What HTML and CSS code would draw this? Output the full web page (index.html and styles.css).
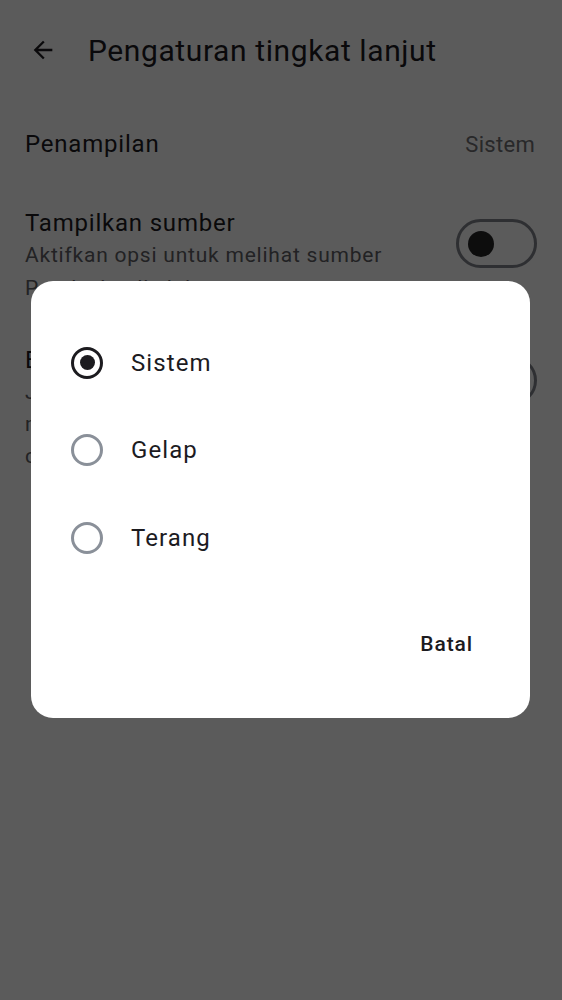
FILE: index.html
```html
<!DOCTYPE html>
<html lang="id">
<head>
<meta charset="utf-8">
<link rel="stylesheet" href="styles.css">
</head>
<body>
<div class="page">
  <header class="topbar">
    <svg class="back" width="28" height="28" viewBox="0 0 24 24"><path d="M20 11H7.83l5.59-5.59L12 4l-8 8 8 8 1.41-1.41L7.83 13H20v-2z" fill="#1c1b1f"/></svg>
    <h1 class="title">Pengaturan tingkat lanjut</h1>
  </header>
  <section class="list">
    <div class="row row-simple">
      <span class="row-title">Penampilan</span>
      <span class="row-value">Sistem</span>
    </div>
    <div class="row row-toggle">
      <div class="row-text">
        <div class="row-title">Tampilkan sumber</div>
        <div class="row-sub">Aktifkan opsi untuk melihat sumber<br>Perplexity di sini</div>
      </div>
      <div class="switch"><span class="thumb"></span></div>
    </div>
    <div class="row row-toggle row-third">
      <div class="row-text">
        <div class="row-title">Eksperimental</div>
        <div class="row-sub">Jika diaktifkan, Anda dapat<br>mencoba fitur eksperimental<br>cepat sebelum dirilis</div>
      </div>
      <div class="switch"><span class="thumb"></span></div>
    </div>
  </section>
</div>
<div class="scrim"></div>
<div class="dialog-wrap">
  <div class="dialog">
    <ul class="options">
      <li class="option"><span class="radio radio-on"></span><span class="option-label">Sistem</span></li>
      <li class="option"><span class="radio"></span><span class="option-label">Gelap</span></li>
      <li class="option"><span class="radio"></span><span class="option-label">Terang</span></li>
    </ul>
    <div class="actions"><span class="btn">Batal</span></div>
  </div>
</div>
</body>
</html>
```
FILE: styles.css
```css
* { box-sizing: border-box; }
html, body { margin: 0; padding: 0; }
body {
  width: 562px;
  height: 1000px;
  background: #fcfcfc;
  font-family: Roboto, "Noto Sans", sans-serif;
  color: #1c1b1f;
  overflow: hidden;
  position: relative;
}
.topbar {
  display: flex;
  align-items: center;
  height: 100px;
  padding-left: 29px;
}
.back { flex: none; }
.title {
  margin: 0 0 0 31px;
  font-size: 30px;
  font-weight: 400;
  color: #1c1b1f;
  letter-spacing: 0.6px;
}
.list { padding: 0 25px; }
.row { display: flex; align-items: center; justify-content: space-between; }
.row-simple { height: 88px; }
.row-title { font-size: 24px; color: #1c1b1f; letter-spacing: 0.8px; }
.row-value { font-size: 22px; color: #6f6f73; margin-right: 2px; letter-spacing: 0.3px; }
.row-toggle { align-items: flex-start; padding-top: 19px; }
.row-text { width: 400px; }
.row-toggle .row-title { line-height: 32px; }
.row-sub {
  font-size: 21px;
  color: #5f5f64;
  line-height: 33px;
  letter-spacing: 0.78px;
}
.row-third { margin-top: 20px; }
.row-third .row-sub { line-height: 32px; }
.switch {
  flex: none;
  width: 81px;
  height: 49px;
  border: 3px solid #80838b;
  border-radius: 25px;
  display: flex;
  align-items: center;
  padding-left: 9px;
  margin-top: 12px;
}
.thumb { width: 26px; height: 26px; border-radius: 50%; background: #242426; }
.scrim {
  position: absolute;
  inset: 0;
  background: rgba(0, 0, 0, 0.64);
}
.dialog-wrap {
  position: absolute;
  left: 31px;
  top: 281px;
  width: 499px;
}
.dialog {
  background: #fff;
  border-radius: 22px;
  height: 437px;
  padding: 38px 0 0 40px;
}
.options { list-style: none; margin: 0; padding: 0; }
.option { display: flex; align-items: center; height: 87.5px; }
.radio {
  width: 32px;
  height: 32px;
  border-radius: 50%;
  border: 3px solid #8a9099;
  flex: none;
}
.radio-on {
  border-color: #1c1b1f;
  display: flex;
  align-items: center;
  justify-content: center;
}
.radio-on::after {
  content: "";
  width: 15px;
  height: 15px;
  border-radius: 50%;
  background: #1c1b1f;
}
.option-label { margin-left: 28px; font-size: 24px; color: #1c1b1f; letter-spacing: 1.1px; }
.actions { display: flex; justify-content: flex-end; padding-right: 57px; margin-top: 50px; }
.btn { font-size: 21px; font-weight: 500; color: #1c1b1f; letter-spacing: 0.9px; }
```
